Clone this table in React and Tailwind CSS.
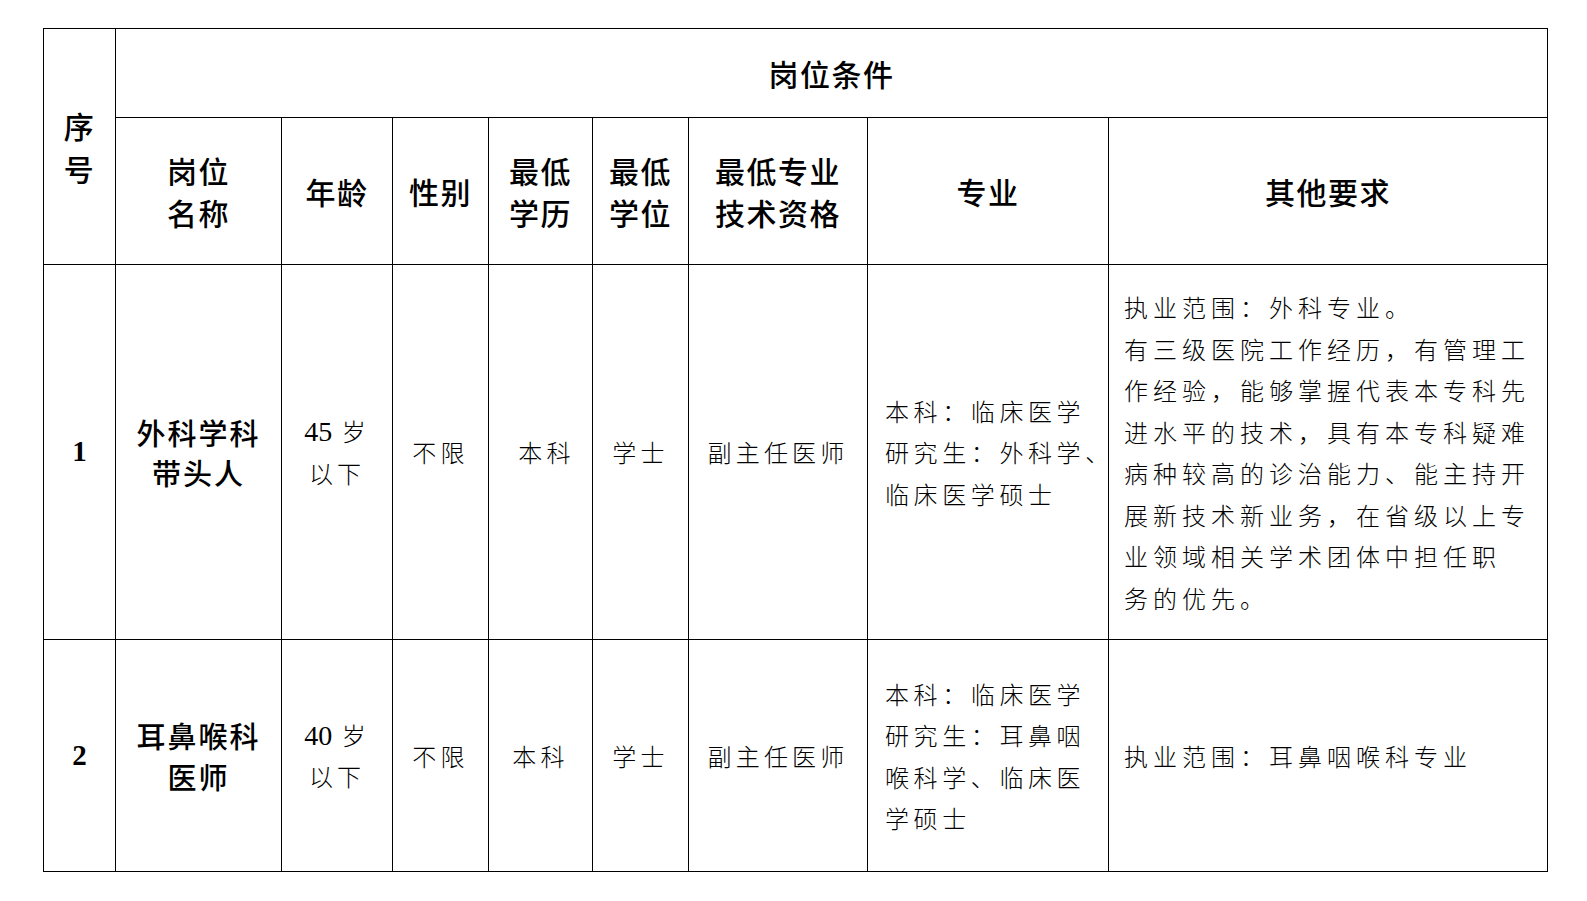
import React from 'react';

const cjk = { fontFamily: '"Noto Sans CJK SC", "Noto Sans", sans-serif' };
const num = { fontFamily: '"Liberation Serif", "Noto Sans CJK SC", serif' };

const cols = [72, 166, 111, 96, 104, 96, 179, 241, 439];

const rows = [
  {
    no: '1',
    name: ['外科学科', '带头人'],
    age: '45',
    sex: '不限',
    edu: '本科',
    eduShift: 'pl-3',
    degree: '学士',
    title: '副主任医师',
    major: ['本科：临床医学', '研究生：外科学、', '临床医学硕士'],
    other: [
      '执业范围：外科专业。',
      '有三级医院工作经历，有管理工',
      '作经验，能够掌握代表本专科先',
      '进水平的技术，具有本专科疑难',
      '病种较高的诊治能力、能主持开',
      '展新技术新业务，在省级以上专',
      '业领域相关学术团体中担任职',
      '务的优先。',
    ],
    h: 'h-[375px]',
  },
  {
    no: '2',
    name: ['耳鼻喉科', '医师'],
    age: '40',
    sex: '不限',
    edu: '本科',
    eduShift: '',
    degree: '学士',
    title: '副主任医师',
    major: ['本科：临床医学', '研究生：耳鼻咽', '喉科学、临床医', '学硕士'],
    other: ['执业范围：耳鼻咽喉科专业'],
    h: 'h-[232px]',
  },
];

const Head = ({ lines, className = '', rowSpan }) => (
  <th
    rowSpan={rowSpan}
    className={`border border-black p-0 text-center align-middle font-medium text-[30px] leading-[42.5px] tracking-[1.5px] whitespace-nowrap ${className}`}
  >
    {lines.map((l) => (
      <div key={l}>{l}</div>
    ))}
  </th>
);

const Plain = ({ children, className = '' }) => (
  <td className={`border border-black p-0 text-center align-middle font-light text-[24px] leading-[41.5px] tracking-[4.2px] whitespace-nowrap ${className}`}>
    {children}
  </td>
);

export default function App() {
  return (
    <div className="min-h-screen bg-white pl-[43px] pt-[28px] text-black" style={cjk}>
      <table className="table-fixed border-collapse w-[1505px]">
        <colgroup>
          {cols.map((w, i) => (
            <col key={i} style={{ width: w }} />
          ))}
        </colgroup>
        <thead>
          <tr className="h-[89px]">
            <Head lines={['序', '号']} rowSpan={2} className="leading-[37.5px]" />
            <th colSpan={8} className="border border-black p-0 text-center align-middle font-medium text-[30px] tracking-[1.5px]">
              岗位条件
            </th>
          </tr>
          <tr className="h-[147px]">
            <Head lines={['岗位', '名称']} />
            <Head lines={['年龄']} />
            <Head lines={['性别']} />
            <Head lines={['最低', '学历']} />
            <Head lines={['最低', '学位']} />
            <Head lines={['最低专业', '技术资格']} />
            <Head lines={['专业']} />
            <Head lines={['其他要求']} />
          </tr>
        </thead>
        <tbody>
          {rows.map((r) => (
            <tr key={r.no} className={r.h}>
              <td className="border border-black p-0 text-center align-middle font-bold text-[29px]" style={num}>
                {r.no}
              </td>
              <td className="border border-black p-0 text-center align-middle font-medium text-[29px] leading-[40.5px] tracking-[2px]">
                {r.name.map((l) => (
                  <div key={l}>{l}</div>
                ))}
              </td>
              <td className="border border-black p-0 text-center align-middle font-light text-[24px] leading-[40.5px] tracking-[4px]">
                <div>
                  <span className="text-[28px] tracking-normal" style={num}>{r.age}</span> 岁
                </div>
                <div>以下</div>
              </td>
              <Plain>{r.sex}</Plain>
              <Plain className={r.eduShift}>{r.edu}</Plain>
              <Plain>{r.degree}</Plain>
              <Plain>{r.title}</Plain>
              <td className="border border-black p-0 pl-[17px] text-left align-middle font-light text-[24px] leading-[41.5px] tracking-[4.6px] whitespace-nowrap">
                {r.major.map((l) => (
                  <div key={l}>{l}</div>
                ))}
              </td>
              <td className="border border-black p-0 pl-[15px] text-left align-middle font-light text-[24px] leading-[41.5px] tracking-[5px] whitespace-nowrap">
                {r.other.map((l) => (
                  <div key={l}>{l}</div>
                ))}
              </td>
            </tr>
          ))}
        </tbody>
      </table>
    </div>
  );
}
